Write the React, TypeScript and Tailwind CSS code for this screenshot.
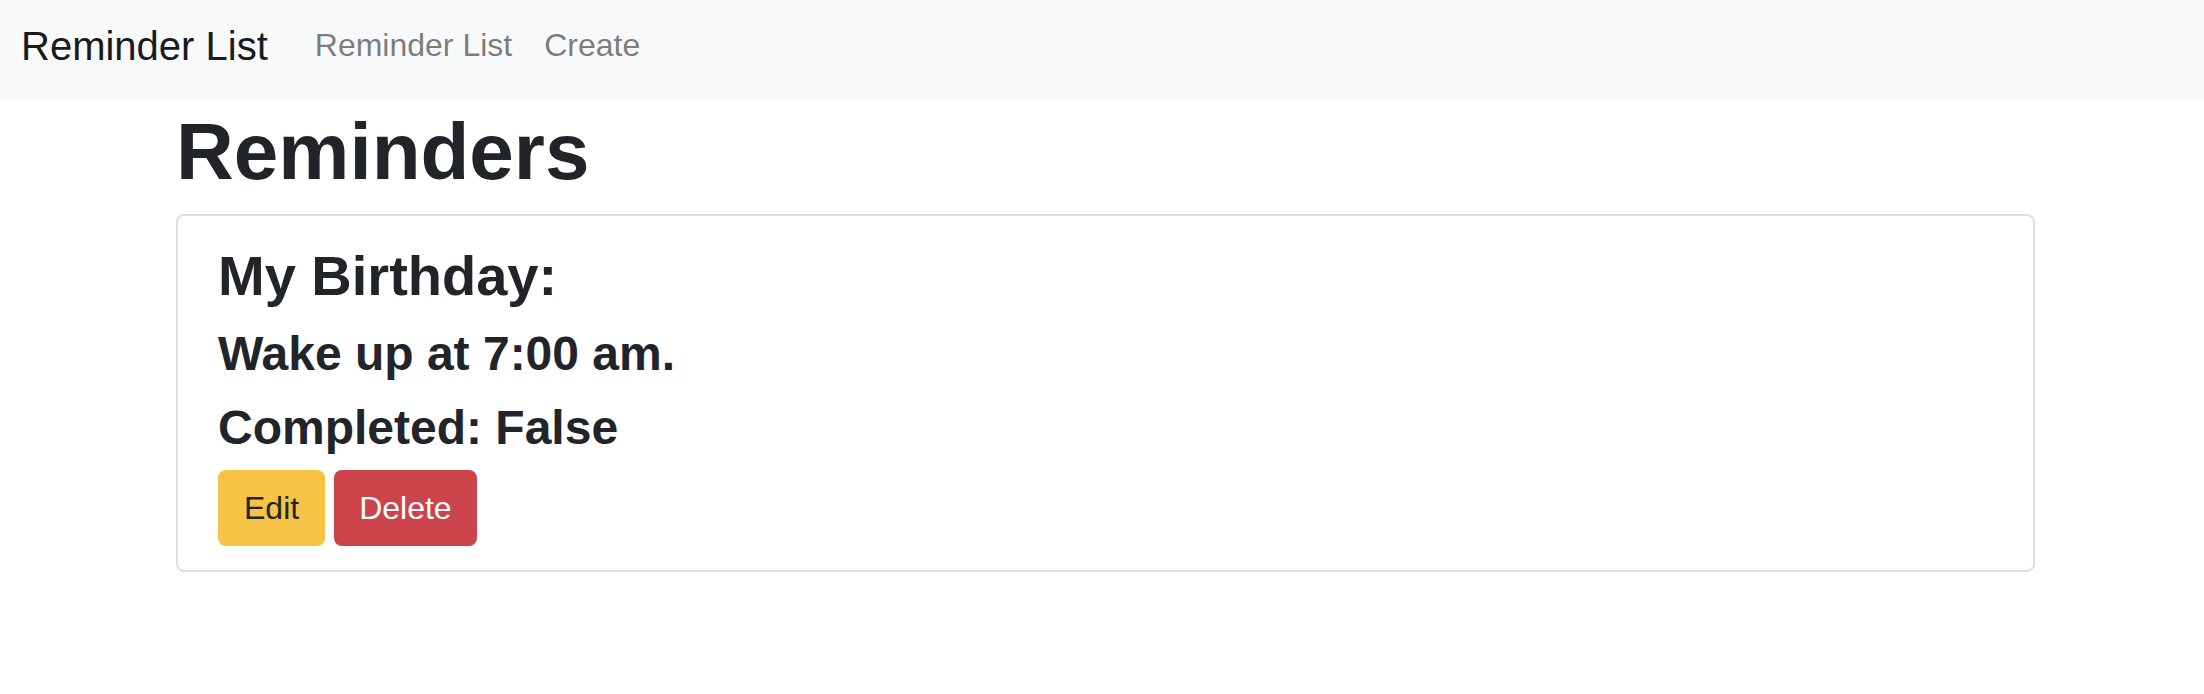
const font = { fontFamily: '"Liberation Sans", Arial, sans-serif' };

export default function App() {
  return (
    <div className="min-h-screen bg-white text-[#212529]" style={font}>
      <nav className="flex h-[101px] items-start bg-[#f8f9fa] pl-[21px] pt-[16px]">
        <a className="mr-[31px] text-[40px] leading-[60px] text-[#1a1a1a]" href="#">
          Reminder List
        </a>
        <ul className="mt-[5px] flex">
          <li>
            <a className="block px-4 text-[32px] leading-[48px] text-[rgba(0,0,0,0.52)]" href="#">
              Reminder List
            </a>
          </li>
          <li>
            <a className="block px-4 text-[32px] leading-[48px] text-[rgba(0,0,0,0.52)]" href="#">
              Create
            </a>
          </li>
        </ul>
      </nav>

      <main className="ml-[176px] w-[1859px]">
        <h1 className="mt-[3px] mb-[14px] text-[80px] font-bold leading-[96px]">Reminders</h1>

        <div className="rounded-[8px] border-2 border-[#dfdfdf] px-[40px] pt-[26px] pb-[24px]">
          <h3 className="mb-4 text-[56px] font-bold leading-[67px]">My Birthday:</h3>
          <h4 className="mb-4 text-[48px] font-bold leading-[58px]">Wake up at 7:00 am.</h4>
          <h4 className="mb-[13px] text-[48px] font-bold leading-[58px]">Completed: False</h4>
          <div className="flex gap-[9px]">
            <button className="h-[76px] rounded-[8px] bg-[#f6c344] px-[26px] text-[32px] leading-[48px] text-[#212529]">
              Edit
            </button>
            <button className="h-[76px] rounded-[8px] bg-[#cb444b] px-[25px] text-[32px] leading-[48px] text-white">
              Delete
            </button>
          </div>
        </div>
      </main>
    </div>
  );
}
